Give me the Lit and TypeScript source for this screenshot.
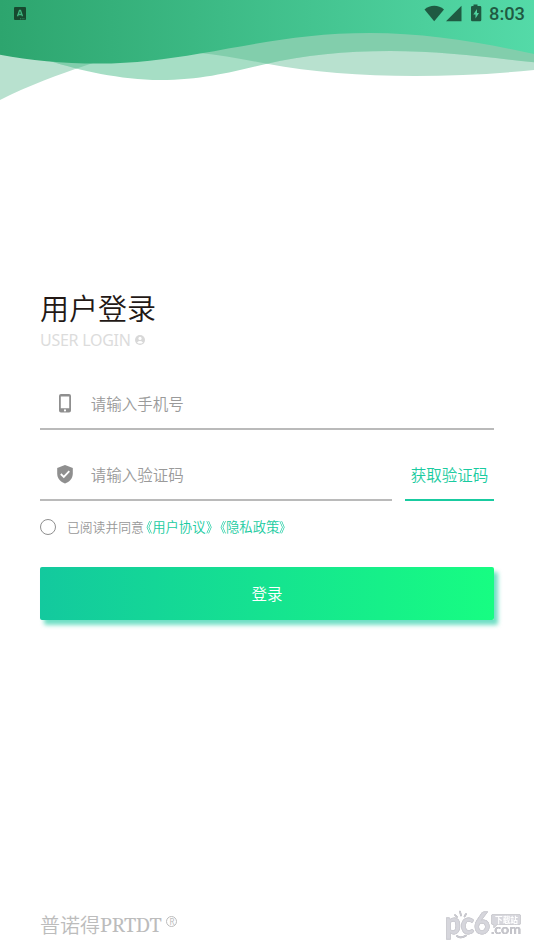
import { LitElement, html, css, svg } from "lit";
import { customElement, property } from "lit/decorators.js";

@customElement("wave-header")
class WaveHeader extends LitElement {
  static styles = css`
    :host { display: block; position: relative; height: 110px; }
    .waves { position: absolute; inset: 0; display: block; }
    .status { position: relative; height: 27px; display: flex; align-items: center; color: #1f5a42; }
    .badge { margin-left: 14px; width: 12px; height: 13px; }
    .right { margin-left: auto; display: flex; align-items: center; padding-right: 9px; }
    .time { font: 500 18.3px/27px Roboto, sans-serif; margin-left: 4px; }
    svg { display: block; }
  `;
  render() {
    const mid = "M0 0H534V62.3C490 57.500 440 51 390 51C345 51 303 55.500 267 63.700C235 71 204 80 160 80C121 80 78 70 50 61L0 40Z";
    const back = "M0 0H534V70C495 74 455 76 415 76C360 76 312 72 267 63.700C242 59 220 55 200 53C165 46 125 52 90 64C57 75 30 85 0 100Z";
    return html`
      <svg class="waves" width="534" height="110" viewBox="0 0 534 110">
        <defs>
          <linearGradient id="g"><stop stop-color="#2da56e"/><stop offset="1" stop-color="#54daa8"/></linearGradient>
          <clipPath id="c"><path d=${mid}/></clipPath>
        </defs>
        <path d=${back} fill="#b8e1cf"/>
        <path d=${mid} fill="#a6dec5"/>
        <path d=${back} fill="#82ceac" clip-path="url(#c)"/>
        <path d="M0 0H534V54C480 42 425 33 370 33C305 33 255 44 200 53.500C165 59.500 135 63.600 98 63.600C62 63.600 30 60 0 54.700Z" fill="url(#g)"/>
      </svg>
      <div class="status">
        <svg class="badge" viewBox="0 0 12 13"><rect width="12" height="13" rx="1" fill="#17492f"/><path d="M3.500 9.300 5.500 3.500h1L8.500 9.300M4.300 7.500h3.400" fill="none" stroke="#3fb57e" stroke-width="1.300"/><path d="M6 11.800h5" stroke="#3fb57e" stroke-width=".7" stroke-dasharray="1 .7"/></svg>
        <div class="right">
          <svg width="61" height="20" viewBox="424 3.500 61 20" fill="#1f5a42">
            <path d="M424.500 9C430 4 438.500 4 444 9L434.200 20.800Z"/>
            <path d="M461.500 5.300V20.800H446Z"/>
            <path d="M473.500 5.500V4h4v1.500H480a1.300 1.300 0 0 1 1.300 1.300V19.500a1.300 1.300 0 0 1-1.300 1.300H472.300a1.300 1.300 0 0 1-1.300-1.300V6.800a1.300 1.300 0 0 1 1.300-1.300Z"/>
            <path d="M477 8.500 473.300 14H475.500V18L479 12.600H477Z" fill="#4fd29f"/>
          </svg>
          <span class="time">8:03</span>
        </div>
      </div>`;
  }
}

const phone = svg`<path fill-rule="evenodd" d="M6 1h8a2 2 0 0 1 2 2v14.500a2 2 0 0 1-2 2H6a2 2 0 0 1-2-2v-14.500a2 2 0 0 1 2-2ZM5.800 3.500v11.800h8.400V3.500ZM10 16.300a1.100 1.100 0 1 0 0 2.200 1.100 1.100 0 0 0 0-2.200Z"/>`;
const shield = svg`<path d="M10 1 17.800 4V9.400C17.800 14.200 14.500 17.900 10 19.400 5.500 17.900 2.200 14.200 2.200 9.400V4Z"/><path d="M5.800 10 8.800 12.900 14.300 7.200" fill="none" stroke="#fff" stroke-width="1.800"/>`;

@customElement("form-field")
class FormField extends LitElement {
  @property() icon = "phone";
  @property() hint = "";
  static styles = css`
    :host { display: flex; align-items: center; box-sizing: border-box; height: 51px; border-bottom: 2px solid #bababa; padding: 0 0 2px 15px; color: #9a9a9a; font: 350 15.500px/20px "Noto Sans CJK SC", sans-serif; }
    svg { width: 20px; height: 20px; margin-right: 15.700px; fill: #8f8f8f; }
  `;
  render() {
    return html`<svg viewBox="0 0 20 20">${this.icon === "phone" ? phone : shield}</svg><span>${this.hint}</span>`;
  }
}

@customElement("app-root")
class AppRoot extends LitElement {
  static styles = css`
    :host { display: flex; flex-direction: column; width: 534px; height: 950px; background: #fff; overflow: hidden; font-family: "Noto Sans CJK SC", sans-serif; font-weight: 350; }
    main { padding: 175px 40px 0; flex: 1; }
    h1 { margin: 0; font-weight: 350; font-size: 29px; line-height: 44px; color: #231815; }
    .sub { display: flex; align-items: center; height: 22px; font: 16px/22px "Noto Sans", sans-serif; letter-spacing: -.27px; color: #dcdcdc; gap: 4px; }
    .phone { margin-top: 28px; }
    .row { display: flex; gap: 13px; margin-top: 20px; }
    .row form-field { flex: 1; }
    .code { width: 89px; height: 51px; box-sizing: border-box; border-bottom: 2px solid #19cba0; color: #19cba0; text-align: center; font-size: 15.500px; line-height: 48px; }
    .agree { display: flex; align-items: center; height: 20px; margin-top: 16px; font-size: 12.800px; line-height: 20px; color: #999; white-space: nowrap; text-spacing-trim: space-all; }
    .agree i { width: 14px; height: 14px; border: 1px solid #8f8f8f; border-radius: 50%; margin-right: 11px; }
    .links { display: flex; gap: 0; color: #19cba0; font-size: 13.350px; margin-left: -5px; }
    .open, .close { transform: scaleX(.9); }
    .open { transform-origin: right; }
    .close { transform-origin: left; margin-right: -6.300px; }
    .login { margin-top: 30px; height: 53px; border-radius: 2px; background: linear-gradient(90deg, #13c99e, #17fd82); box-shadow: 4px 5px 4px rgba(19, 201, 158, .6); color: #fff; text-align: center; font-size: 15.500px; line-height: 53px; }
    footer { display: flex; justify-content: space-between; align-items: center; height: 50px; padding: 0 11px 0 40px; color: #bcbcbc; }
    .brand { display: flex; align-items: center; font-size: 20px; line-height: 30px; }
    .latin { font-family: "Noto Serif", "DejaVu Serif Condensed", "DejaVu Serif", serif; font-weight: 400; letter-spacing: -.4px; }
    .reg { font: 8px/9px "Noto Sans", sans-serif; width: 9px; height: 9px; border: 1px solid #bcbcbc; border-radius: 50%; text-align: center; margin: -8px 0 0 5px; }
    .logo { overflow: visible; filter: drop-shadow(.5px .8px .3px #aaaab0); }
    .logo-main { font: 900 31px Lato, sans-serif; }
    .logo-com { font: bold 14px Lato, sans-serif; }
    .logo-tag { font: bold 8.500px "Noto Sans CJK SC", sans-serif; }
  `;
  render() {
    return html`
      <wave-header></wave-header>
      <main>
        <h1>用户登录</h1>
        <div class="sub"><span>USER LOGIN</span><svg width="10" height="10" viewBox="0 0 10 10"><circle cx="5" cy="5" r="5" fill="#d8d8d8"/><circle cx="5" cy="3.400" r="1.600" fill="#fff"/><path d="M2 7.400Q5 4.800 8 7.400Q5 9.800 2 7.400Z" fill="#fff"/></svg></div>
        <form-field class="phone" icon="phone" hint="请输入手机号"></form-field>
        <div class="row"><form-field icon="shield" hint="请输入验证码"></form-field><div class="code">获取验证码</div></div>
        <div class="agree"><i></i><span>已阅读并同意</span><div class="links">
          <span class="open">《</span><span>用户协议</span><span class="close">》</span><span class="open">《</span><span>隐私政策</span><span class="close">》</span>
        </div></div>
        <div class="login">登录</div>
      </main>
      <footer>
        <div class="brand"><span>普诺得</span><span class="latin">PRTDT</span><span class="reg">R</span></div>
        <svg class="logo" width="78" height="34" viewBox="0 0 78 34">
          <g fill="#d6d6dc" stroke="#d0d0d6" stroke-width=".8">
            <text class="logo-main" x="0" y="25.500" textLength="45" lengthAdjust="spacingAndGlyphs">pc6</text>
            <path d="M48 6.500h26a1.500 1.500 0 0 1 1.500 1.500v7a1.500 1.500 0 0 1-1.500 1.500H52l-3 3v-3h-1a1.500 1.500 0 0 1-1.500-1.500V8a1.500 1.500 0 0 1 1.500-1.500Z"/>
          </g>
          <text class="logo-com" x="46" y="25.500" fill="#c6c6cc" textLength="30" lengthAdjust="spacingAndGlyphs">.com</text>
          <path d="M10 7 12 9M15 3.500 16 7.500M21 6 19.500 8.500M12 28Q16 31 21 27.500" fill="none" stroke="#c9c9cf" stroke-width="1.600" stroke-linecap="round"/>
          <text class="logo-tag" x="50" y="14.600" fill="#fff" textLength="23" lengthAdjust="spacingAndGlyphs">下载站</text>
        </svg>
      </footer>`;
  }
}
